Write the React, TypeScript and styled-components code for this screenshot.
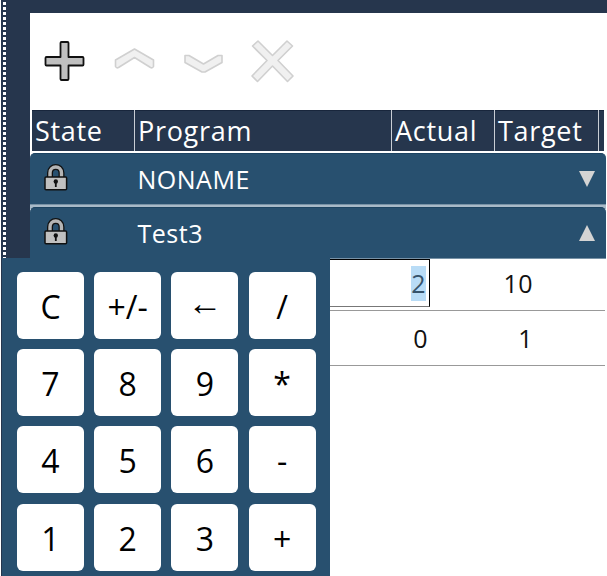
import React from "react";
import styled, { createGlobalStyle } from "styled-components";

const Global = createGlobalStyle`
  * { box-sizing: border-box; }
  body { margin: 0; overflow: hidden; background: #fff; }
`;

const Screen = styled.main`
  position: relative;
  display: flex;
  width: 607px;
  height: 576px;
  overflow: hidden;
  background: #fff;
  font-family: "Open Sans", "Noto Sans", sans-serif;
`;

const Rail = styled.aside`
  flex: 0 0 29px;
  margin-left: 1px;
  padding-left: 2px;
  background: #26364d;
`;

const Dots = styled.div`
  width: 3px;
  height: 100%;
  background: repeating-linear-gradient(to bottom, #26364d 0 2px, #fff 2px 5px);
`;

const Content = styled.section`
  flex: 1;
  min-width: 0;
  border-top: 13px solid #26364d;
`;

const Toolbar = styled.div`
  display: flex;
  align-items: center;
  gap: 21.6px;
  height: 97px;
  padding: 0 0 1px 11px;
`;

const ToolButton = styled.button`
  width: 48px;
  height: 48px;
  padding: 0;
  border: 0;
  background: none;
  svg { display: block; }
`;

const HeaderRow = styled.div`
  display: grid;
  grid-template-columns: 102px 256px 102px 103px 5px;
  column-gap: 1px;
  width: 572px;
  height: 41px;
  margin-left: 2px;
  background: #c9ced5;
`;

const HeaderCell = styled.div`
  padding-left: 3px;
  background: #26364d;
  border-top: 1px solid #18263c;
  color: #fff;
  font-size: 27px;
  letter-spacing: 0.7px;
  line-height: 40px;
  white-space: nowrap;
  overflow: hidden;
`;

const Groups = styled.div`
  display: grid;
  grid-template-rows: 52px 52px;
  row-gap: 2px;
  width: 576px;
  margin-top: 2px;
  background: linear-gradient(to bottom, transparent 50px, #a9bac8 50px 56px, transparent 56px);
`;

const Group = styled.div`
  display: flex;
  align-items: center;
  padding: 0 11px 0 13.5px;
  border-radius: 5px 5px 0 0;
  border-top: 1px solid #1d4462;
  border-bottom: 1px solid #7892a6;
  background: #28506f;
  color: #fff;
  font-size: 25px;
  letter-spacing: 0.5px;
  svg { flex: none; }
`;

const GroupName = styled.span`
  flex: 1;
  padding-left: 70px;
  line-height: 50px;
`;

const Row = styled.div<{ $height: number }>`
  display: grid;
  grid-template-columns: 400px 105px;
  height: ${(p) => p.$height}px;
  width: 575px;
  border-bottom: 1px solid #999;
  font-size: 25px;
  letter-spacing: 0.4px;
  line-height: ${(p) => (p.$height > 52 ? 55 : 49)}px;
  color: #111;
  text-align: right;
`;

const Value = styled.div`
  padding-right: 2px;
`;

const Editor = styled.div`
  display: flex;
  align-items: center;
  justify-content: flex-end;
  height: 48px;
  padding-right: 3px;
  border: 1px solid #000;
  border-bottom-color: #777;
`;

const Selection = styled.span`
  height: 35px;
  line-height: 34px;
  background: #b9dcf6;
  color: #36536b;
`;

const Keypad = styled.div`
  position: absolute;
  left: 2px;
  top: 258px;
  width: 328px;
  height: 330px;
  padding: 14px 14px 0 15px;
  display: grid;
  grid-template-columns: repeat(4, 67px);
  grid-auto-rows: 67px;
  gap: 10.2px;
  background: #28506f;
`;

const Key = styled.button<{ $arrow?: boolean }>`
  padding: 0 0 ${(p) => (p.$arrow ? 7 : 0)}px;
  border: 0;
  border-radius: 6px;
  background: #fff;
  color: #000;
  font-family: "Open Sans", "Noto Sans", sans-serif;
  font-size: ${(p) => (p.$arrow ? 35 : 32)}px;
  font-weight: 400;
  line-height: ${(p) => (p.$arrow ? 60 : 70)}px;
`;

const outline = (on: boolean) => ({
  fill: on ? "#c0c0c0" : "#f0f0f0",
  stroke: on ? "#111" : "#d0d0d0",
  strokeWidth: on ? 1.8 : 1.6,
  strokeLinejoin: "round" as const,
});

const icons = [
  { name: "Add", d: "M20.500 5h6q1 0 1 1v14h14q1 0 1 1v6.500q0 1-1 1H27.500V42q0 1-1 1h-6q-1 0-1-1V28.500H5.500q-1 0-1-1V21q0-1 1-1H19.500V6q0-1 1-1z", on: true },
  { name: "Up", d: "M23.500 12 42.500 23V29.500q-1 2-3 1L23.500 20.500 7.500 30.500q-2 1-3-1V23z", on: false },
  { name: "Down", d: "M5 18.500h4L23.500 27 38 18.500h4v7L25 35h-3L5 25.500z", on: false },
  { name: "Delete", d: "M8 4 22.500 18.500 37 4l5.500 5L28 23.500 43 39l-5.500 5.500L22.500 29 7.500 44.500 2 39 17 23.500 2.500 9z", on: false },
];

const keys = ["C", "+/-", "←", "/", "7", "8", "9", "*", "4", "5", "6", "-", "1", "2", "3", "+"];

const Lock = () => (
  <svg width="24" height="30" viewBox="0 0 24 30">
    <path d="M6 15V9C6 1 17.500 1 17.500 9V15" fill="none" stroke="#111" strokeWidth="6" />
    <path d="M6 15V9C6 1 17.500 1 17.500 9V15" fill="none" stroke="#b5b5b5" strokeWidth="3.400" />
    <rect x="1" y="13" width="21.600" height="12.800" rx="1" fill="#c0c0c0" stroke="#111" strokeWidth="1.500" />
    <path d="M11.800 16.500v6.500" stroke="#111" strokeWidth="1.800" />
    <circle cx="11.800" cy="17.500" r="2.200" fill="#111" />
  </svg>
);

const GroupRow = ({ name, open }: { name: string; open?: boolean }) => (
  <Group>
    <Lock />
    <GroupName>{name}</GroupName>
    <svg width="16" height="16" viewBox="0 0 16 16">
      <path d={open ? "M0 16 8 0l8 16z" : "M0 0h16L8 16z"} fill="#d4d4d4" />
    </svg>
  </Group>
);

export default function App() {
  return (
    <Screen>
      <Global />
      <Rail><Dots /></Rail>
      <Content>
        <Toolbar>
          {icons.map((i) => (
            <ToolButton key={i.name} aria-label={i.name} disabled={!i.on}>
              <svg width="48" height="48" viewBox="0 0 48 48"><path d={i.d} {...outline(i.on)} /></svg>
            </ToolButton>
          ))}
        </Toolbar>
        <HeaderRow>
          {["State", "Program", "Actual", "Target", ""].map((h) => <HeaderCell key={h}>{h}</HeaderCell>)}
        </HeaderRow>
        <Groups>
          <GroupRow name="NONAME" />
          <GroupRow name="Test3" open />
        </Groups>
        <Row $height={52}><Editor><Selection>2</Selection></Editor><Value>10</Value></Row>
        <Row $height={55}><Value>0</Value><Value>1</Value></Row>
      </Content>
      <Keypad>{keys.map((k) => <Key key={k} $arrow={k === "←"}>{k}</Key>)}</Keypad>
    </Screen>
  );
}
